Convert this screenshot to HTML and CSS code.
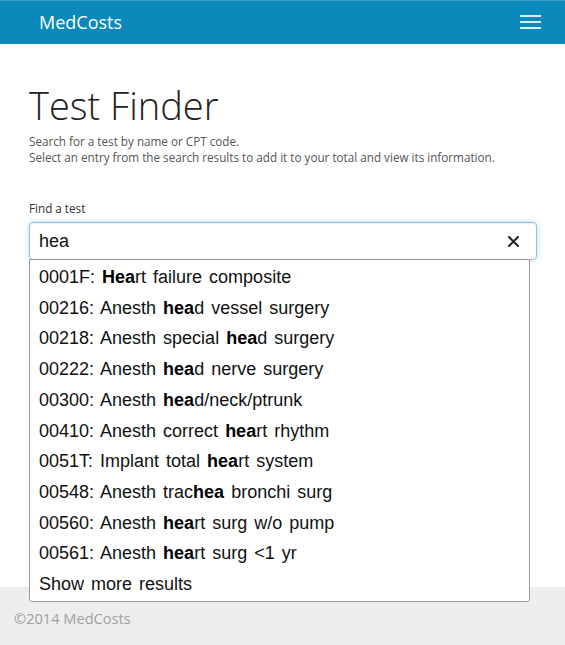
FILE: index.html
```html
<!DOCTYPE html>
<html lang="en">
<head>
<meta charset="utf-8">
<title>MedCosts - Test Finder</title>
<link rel="stylesheet" href="styles.css">
</head>
<body>
<header class="navbar">
  <a class="brand" href="#">MedCosts</a>
  <button class="toggle" aria-label="Menu">
    <span class="bar"></span><span class="bar"></span><span class="bar"></span>
  </button>
</header>
<main class="content">
  <h1 class="title">Test Finder</h1>
  <p class="intro">Search for a test by name or CPT code.<br>Select an entry from the search results to add it to your total and view its information.</p>
  <label class="label" for="q">Find a test</label>
  <div class="search">
    <div class="input-box">
      <span class="query" id="q">hea</span>
      <svg class="clear" width="11" height="11" viewBox="0 0 11 11"><path d="M1 1L10 10M10 1L1 10" stroke="#222" stroke-width="2" stroke-linecap="square"/></svg>
    </div>
    <ul class="results">
      <li>0001F: <b>Hea</b>rt failure composite</li>
      <li>00216: Anesth <b>hea</b>d vessel surgery</li>
      <li>00218: Anesth special <b>hea</b>d surgery</li>
      <li>00222: Anesth <b>hea</b>d nerve surgery</li>
      <li>00300: Anesth <b>hea</b>d/neck/ptrunk</li>
      <li>00410: Anesth correct <b>hea</b>rt rhythm</li>
      <li>0051T: Implant total <b>hea</b>rt system</li>
      <li>00548: Anesth trac<b>hea</b> bronchi surg</li>
      <li>00560: Anesth <b>hea</b>rt surg w/o pump</li>
      <li>00561: Anesth <b>hea</b>rt surg &lt;1 yr</li>
      <li>Show more results</li>
    </ul>
  </div>
</main>
<footer class="footer">©2014 MedCosts</footer>
</body>
</html>
```

FILE: styles.css
```css
* { box-sizing: border-box; }
html, body { margin: 0; padding: 0; }
body {
  min-height: 100vh;
  display: flex;
  flex-direction: column;
  font-family: "Open Sans", "Liberation Sans", sans-serif;
  background: #fff;
  color: #333;
}
.navbar {
  height: 44px;
  background: #0a89ba;
  border-top: 1px solid #3a9fc7;
  display: flex;
  align-items: center;
  justify-content: space-between;
  padding: 0 24px 0 39px;
}
.brand {
  color: #fff;
  text-decoration: none;
  font-size: 18px;
  font-weight: 400;
  line-height: 24px;
  margin-top: -2px;
}
.toggle {
  background: none;
  border: 0;
  padding: 0;
  width: 21px;
  display: flex;
  flex-direction: column;
  gap: 4px;
  margin-top: -1px;
}
.bar {
  display: block;
  height: 2px;
  background: #d4f0fa;
}
.content {
  flex: 1;
  padding: 0 28px 0 29px;
  position: relative;
}
.title {
  margin: 38px 0 0;
  font-size: 38px;
  font-weight: 300;
  line-height: 46px;
  color: #222;
}
.intro {
  margin: 5px 0 0;
  font-size: 11.7px;
  line-height: 16px;
  color: #555;
}
.label {
  display: block;
  margin-top: 35px;
  font-size: 11.7px;
  line-height: 16px;
  color: #333;
}
.search {
  position: relative;
  margin-top: 6px;
}
.input-box {
  height: 38px;
  width: 508px;
  border: 1px solid #8ec1e6;
  border-radius: 4px;
  box-shadow: inset 0 1px 1px rgba(0,0,0,.05), 0 0 6px rgba(102,175,233,.45);
  display: flex;
  align-items: center;
  justify-content: space-between;
  padding: 0 17px 0 9px;
}
.query {
  font-family: "Liberation Sans", Arial, sans-serif;
  font-size: 18px;
  color: #111;
  margin-top: 1px;
}
.clear { display: block; }
.results {
  position: absolute;
  top: 37px;
  left: 0;
  width: 501px;
  margin: 0;
  padding: 2px 0 1px;
  list-style: none;
  background: #fff;
  border: 1px solid #9a9a9a;
  border-radius: 0 0 3px 3px;
  z-index: 2;
}
.results li {
  font-family: "Liberation Sans", Arial, sans-serif;
  font-size: 18px;
  line-height: 30.7px;
  padding-left: 9px;
  color: #111;
  white-space: nowrap;
  word-spacing: 2px;
}
.results b { font-weight: 700; color: #000; }
.footer {
  height: 58px;
  background: #eee;
  color: #a0a0a0;
  font-size: 14.6px;
  line-height: 20px;
  padding: 21px 14px 0;
}
```
